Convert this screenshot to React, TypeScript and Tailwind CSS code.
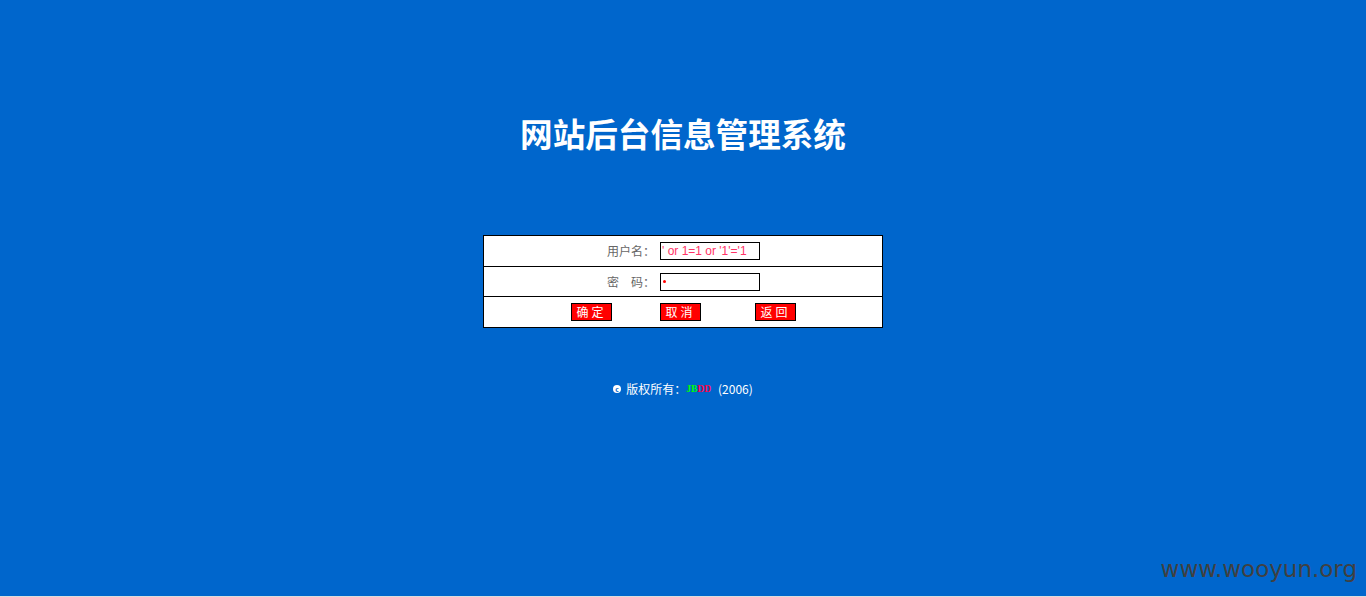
export default function App() {
  const cjk = { fontFamily: '"Noto Sans CJK SC", "Noto Sans", sans-serif' }

  return (
    <div className="relative flex h-[597px] w-full flex-col overflow-hidden bg-[#dcdcdc]" style={cjk}>
      <div className="flex h-[596px] flex-col items-center bg-[#0066cc]">
        <h1 className="mt-[113px] text-[32.6px] leading-[40px] font-bold text-white">网站后台信息管理系统</h1>

        <div className="mt-[82px] w-[400px] border border-black bg-white text-[12px]">
          <div className="flex h-[30px] items-center">
            <div className="w-[171px] text-right leading-none text-[#666666]">用户名：</div>
            <div className="ml-[5px] flex h-[18px] w-[100px] items-center border border-black pl-px">
              <span
                className="text-[12px] leading-none text-[#ff3366]"
                style={{ fontFamily: '"Liberation Sans", Arial, sans-serif' }}
              >
                ' or 1=1 or '1'='1
              </span>
            </div>
          </div>
          <div className="flex h-[30px] items-center border-t border-black">
            <div className="w-[171px] text-right leading-none text-[#666666]">密　码：</div>
            <div className="ml-[5px] flex h-[18px] w-[100px] items-center border border-black pl-[2px]">
              <span className="block h-[3px] w-[3px] rounded-full bg-[#ff0000]" />
            </div>
          </div>
          <div className="flex h-[31px] items-center border-t border-black">
            <button className="ml-[87px] flex h-[18px] w-[41px] items-center justify-center border border-black bg-[#ff0000] text-[12px] leading-none tracking-[3px] text-white">
              确定
            </button>
            <button className="ml-[48px] flex h-[18px] w-[41px] items-center justify-center border border-black bg-[#ff0000] text-[12px] leading-none tracking-[3px] text-white">
              取消
            </button>
            <button className="ml-[54px] flex h-[18px] w-[41px] items-center justify-center border border-black bg-[#ff0000] text-[12px] leading-none tracking-[3px] text-white">
              返回
            </button>
          </div>
        </div>

        <p className="mt-[53px] flex items-center text-[12px] leading-[16px] text-white">
          <span className="mr-[5px] flex h-[8px] w-[8px] items-center justify-center rounded-full bg-white text-[7px] leading-none font-bold text-[#0066cc]">
            c
          </span>
          版权所有：
          <span
            className="text-[9.5px] font-bold"
            style={{ fontFamily: '"Liberation Serif", serif' }}
          >
            <span className="text-[#00ff00]">JB</span>
            <span className="text-[#ff0044]">DD</span>
          </span>
          <span className="ml-[7px]">(2006)</span>
        </p>
      </div>

      <span
        className="absolute right-[9px] bottom-[16px] text-[23px] leading-none text-[#404040]"
        style={{ fontFamily: '"DejaVu Sans", sans-serif' }}
      >
        www.wooyun.org
      </span>
    </div>
  )
}
